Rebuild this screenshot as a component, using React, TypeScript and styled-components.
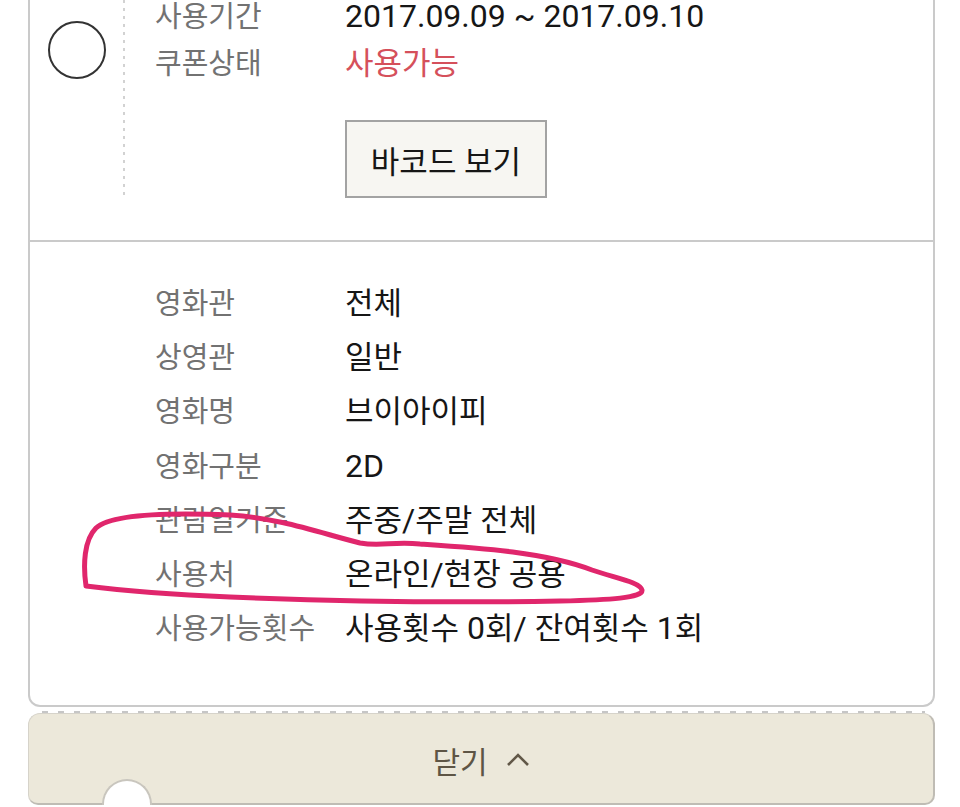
import React from 'react';
import styled, { createGlobalStyle } from 'styled-components';

const GlobalStyle = createGlobalStyle`
  html, body {
    margin: 0;
    padding: 0;
    background: #fff;
    overflow: hidden;
  }
  body {
    font-family: Roboto, "Noto Sans CJK KR", sans-serif;
    color: #1a1a1a;
  }
`;

type Row = { label: string; value: string; accent?: boolean };

const periodRows: Row[] = [
  { label: '사용기간', value: '2017.09.09 ~ 2017.09.10' },
  { label: '쿠폰상태', value: '사용가능', accent: true },
];

const detailRows: Row[] = [
  { label: '영화관', value: '전체' },
  { label: '상영관', value: '일반' },
  { label: '영화명', value: '브이아이피' },
  { label: '영화구분', value: '2D' },
  { label: '관람일기준', value: '주중/주말 전체' },
  { label: '사용처', value: '온라인/현장 공용' },
  { label: '사용가능횟수', value: '사용횟수 0회/ 잔여횟수 1회' },
];

// latin runs are drawn a bit larger, like the phone's system font
const mixed = (text: string) =>
  text
    .split(/([^\uAC00-\uD7A3]+)/)
    .filter(Boolean)
    .map((part, i) => (/[\uAC00-\uD7A3]/.test(part) ? part : <Latin key={i}>{part}</Latin>));

const App = () => {
  return (
    <>
      <GlobalStyle />
      <Page>
        <Card>
          <TopSection>
            <CheckColumn>
              <Circle />
            </CheckColumn>
            <DottedRule />
            <TopContent>
              {periodRows.map(row => (
                <InfoRow key={row.label} $height={48}>
                  <Label>{row.label}</Label>
                  <Value $accent={row.accent}>{mixed(row.value)}</Value>
                </InfoRow>
              ))}
              <BarcodeButton>바코드 보기</BarcodeButton>
            </TopContent>
          </TopSection>
          <DetailSection>
            {detailRows.map(row => (
              <InfoRow key={row.label} $height={54}>
                <Label>{row.label}</Label>
                <Value>{mixed(row.value)}</Value>
              </InfoRow>
            ))}
          </DetailSection>
        </Card>
        <DashedRule />
        <CloseBar>
          <CloseLabel>
            닫기
            <svg width="24" height="14" viewBox="0 0 24 14">
              <polyline points="2,12 12,2 22,12" fill="none" stroke="#625848" strokeWidth="2.6" />
            </svg>
          </CloseLabel>
          <Notch />
        </CloseBar>
        <Scribble width="960" height="807" viewBox="0 0 960 807">
          <path
            d="M 86 586 C 83 565, 84 540, 96 528 C 110 515, 160 512, 230 515 C 280 518, 320 533, 360 543 C 382 547, 392 541, 420 544 C 480 548, 545 552, 592 570 C 615 578, 640 582, 642 590 C 643 598, 610 600, 560 601 C 450 603, 330 601, 230 597 C 160 594, 110 589, 86 586"
            fill="none"
            stroke="#e0266c"
            strokeWidth="5"
            strokeLinecap="round"
            strokeLinejoin="round"
          />
        </Scribble>
      </Page>
    </>
  );
};

export default App;

const Page = styled.div`
  position: relative;
  height: 807px;
  overflow: hidden;
  padding: 0 25px 0 28px;
`;

const Card = styled.div`
  margin-top: -8px;
  background: #fff;
  border: 2px solid #cacaca;
  border-top: none;
  border-radius: 0 0 12px 12px;
`;

const TopSection = styled.div`
  display: flex;
  padding-bottom: 42px;
  border-bottom: 2px solid #cacaca;
`;

const CheckColumn = styled.div`
  width: 93px;
`;

const Circle = styled.div`
  width: 54px;
  height: 54px;
  margin: 29px 0 0 18px;
  border: 2px solid #333;
  border-radius: 50%;
`;

const DottedRule = styled.div`
  width: 2px;
  background: repeating-linear-gradient(to bottom, #d2d2d2 0 3px, transparent 3px 8px);
`;

const TopContent = styled.div`
  padding-left: 30px;
`;

const InfoRow = styled.div<{ $height: number }>`
  display: flex;
  align-items: baseline;
  height: ${p => p.$height}px;
  line-height: ${p => p.$height}px;
`;

const Label = styled.span`
  width: 190px;
  flex-shrink: 0;
  font-size: 29px;
  color: #727272;
`;

const Value = styled.span<{ $accent?: boolean }>`
  font-size: 31px;
  color: ${p => (p.$accent ? '#d5505b' : '#161616')};
`;

const Latin = styled.span`
  font-family: Roboto, sans-serif;
  font-size: 32px;
`;

const BarcodeButton = styled.button`
  display: block;
  margin: 32px 0 0 190px;
  width: 202px;
  height: 78px;
  padding: 0;
  background: #f7f6f2;
  border: 2px solid #a3a3a3;
  font-family: Roboto, "Noto Sans CJK KR", sans-serif;
  font-size: 31px;
  color: #161616;
`;

const DetailSection = styled.div`
  padding: 35px 0 50px 125px;
`;

const DashedRule = styled.div`
  height: 2px;
  margin: 4px 10px 0 14px;
  background: repeating-linear-gradient(to right, #c6c6c6 0 6px, transparent 6px 16px);
`;

const CloseBar = styled.div`
  position: relative;
  height: 89px;
  display: flex;
  align-items: center;
  justify-content: center;
  background: #ece8da;
  border: 1px solid #d6d3ca;
  border-right: 2px solid #bfbcb4;
  border-bottom: 2px solid #bfbcb4;
  border-radius: 12px 12px 10px 10px;
`;

const CloseLabel = styled.div`
  display: flex;
  align-items: center;
  gap: 18px;
  margin-top: 2px;
  font-size: 30px;
  color: #5e5545;
`;

const Notch = styled.div`
  position: absolute;
  left: 73px;
  bottom: -2px;
  width: 46px;
  height: 24px;
  background: #fff;
  border: 2px solid #c9c6be;
  border-bottom: none;
  border-radius: 25px 25px 0 0;
`;

const Scribble = styled.svg`
  position: absolute;
  top: 0;
  left: 0;
  pointer-events: none;
`;
